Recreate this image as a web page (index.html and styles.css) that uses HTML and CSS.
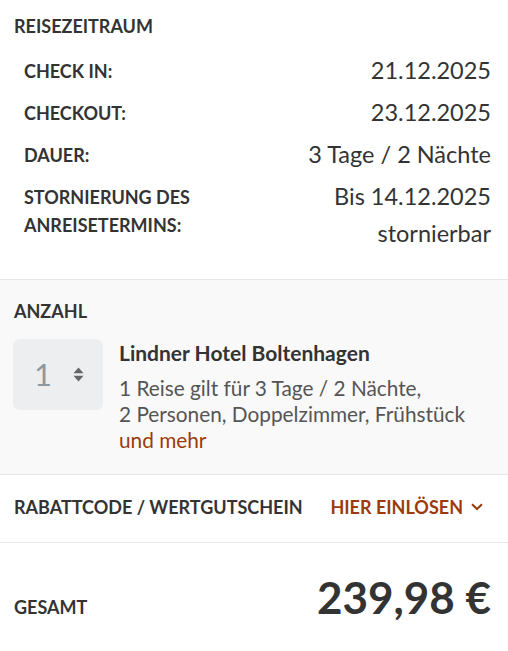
FILE: index.html
```html
<!DOCTYPE html>
<html lang="de">
<head>
<meta charset="utf-8">
<link rel="stylesheet" href="styles.css">
</head>
<body>
<div class="summary">
  <section class="period">
    <h2 class="heading">REISEZEITRAUM</h2>
    <div class="row">
      <div class="label">CHECK IN:</div>
      <div class="value">21.12.2025</div>
    </div>
    <div class="row">
      <div class="label">CHECKOUT:</div>
      <div class="value">23.12.2025</div>
    </div>
    <div class="row">
      <div class="label">DAUER:</div>
      <div class="value">3 Tage / 2 Nächte</div>
    </div>
    <div class="row">
      <div class="label">STORNIERUNG DES<br>ANREISETERMINS:</div>
      <div class="value">Bis 14.12.2025<br>stornierbar</div>
    </div>
  </section>

  <section class="amount">
    <h2 class="heading">ANZAHL</h2>
    <div class="product">
      <div class="stepper">
        <span class="qty">1</span>
        <svg class="updown" width="11" height="15" viewBox="0 0 11 15">
          <path d="M5.5 0.5 L10.5 6.3 H0.5 Z" fill="#666"/>
          <path d="M5.5 14.5 L10.5 8.7 H0.5 Z" fill="#666"/>
        </svg>
      </div>
      <div class="info">
        <div class="name">Lindner Hotel Boltenhagen</div>
        <div class="desc">1 Reise gilt für 3 Tage / 2 Nächte,<br>2 Personen, Doppelzimmer, Frühstück<br><span class="more">und mehr</span></div>
      </div>
    </div>
  </section>

  <section class="voucher">
    <div class="label">RABATTCODE / WERTGUTSCHEIN</div>
    <div class="redeem">HIER EINLÖSEN
      <svg class="chev" width="12" height="8" viewBox="0 0 12 8">
        <path d="M1 1.2 L6 6 L11 1.2" fill="none" stroke="#9c3a0c" stroke-width="2"/>
      </svg>
    </div>
  </section>

  <section class="total">
    <div class="label">GESAMT</div>
    <div class="price">239,98 €</div>
  </section>
</div>
</body>
</html>
```
FILE: styles.css
```css
* { box-sizing: border-box; }
html, body {
  margin: 0;
  padding: 0;
  background: #fff;
}
body {
  font-family: Lato, "Open Sans", sans-serif;
  color: #333;
}
.heading {
  margin: 0;
  font-size: 18px;
  font-weight: 700;
  line-height: 20px;
}
.label {
  font-size: 18px;
  font-weight: 700;
  line-height: 28px;
}
.period {
  padding: 16px 17px 27px 14px;
}
.period .heading {
  margin-bottom: 16px;
}
.row {
  display: flex;
  justify-content: space-between;
  align-items: flex-start;
  padding-left: 10px;
  margin-bottom: 5px;
}
.row:last-child { margin-bottom: 0; }
.row .label {
  padding-top: 5px;
}
.value {
  font-size: 23.5px;
  line-height: 37px;
  text-align: right;
}
.amount {
  background: #f9f9f9;
  border-top: 1px solid #e6e6e6;
  border-bottom: 1px solid #e6e6e6;
  padding: 21px 17px 21px 13px;
}
.amount .heading {
  padding-left: 1px;
  margin-bottom: 18px;
}
.product {
  display: flex;
  align-items: flex-start;
  gap: 16px;
}
.stepper {
  width: 90px;
  height: 71px;
  flex: none;
  background: #eceef0;
  border-radius: 7px;
  display: flex;
  align-items: center;
  padding-left: 21px;
  gap: 22px;
}
.qty {
  font-size: 31px;
  line-height: 1;
  color: #8f989f;
  width: 17px;
  text-align: center;
}
.updown { display: block; }
.info {
  padding-top: 1px;
}
.name {
  font-size: 21px;
  font-weight: 700;
  line-height: 26px;
}
.desc {
  margin-top: 9px;
  font-size: 20.8px;
  line-height: 26px;
  color: #555;
}
.more { color: #9c3a0c; }
.voucher {
  display: flex;
  justify-content: space-between;
  align-items: center;
  padding: 18px 25px 21px 14px;
  border-bottom: 1px solid #e6e6e6;
}
.redeem {
  font-size: 18px;
  font-weight: 700;
  color: #9c3a0c;
  line-height: 28px;
  display: flex;
  align-items: center;
  gap: 8px;
}
.chev { display: block; }
.total {
  display: flex;
  justify-content: space-between;
  align-items: baseline;
  padding: 28px 17px 20px 14px;
}
.price {
  font-size: 44px;
  font-weight: 700;
  line-height: 53px;
}
```
